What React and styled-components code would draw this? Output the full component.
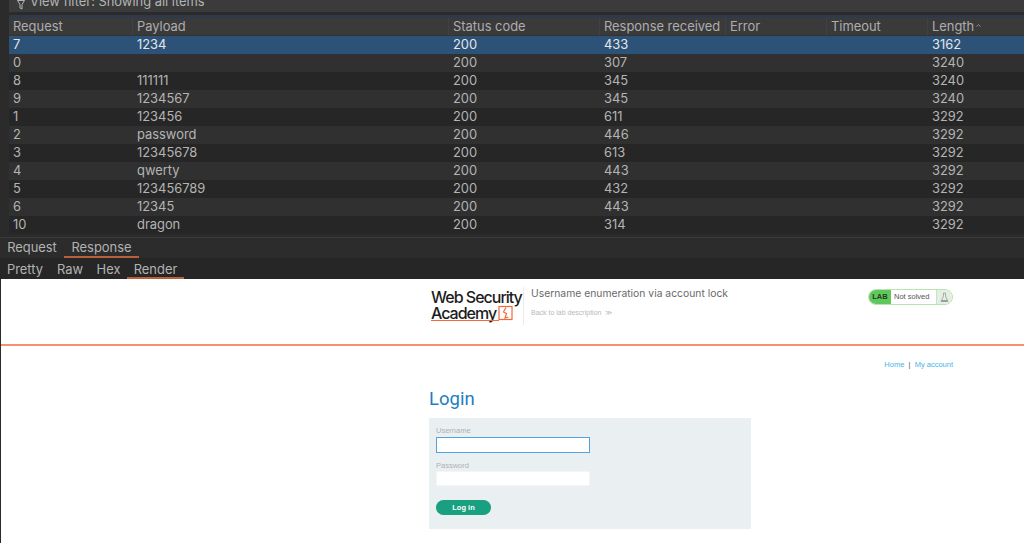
import React from "react";
import styled, { createGlobalStyle } from "styled-components";

const Global = createGlobalStyle`
  html, body { margin: 0; padding: 0; background: #2b2b2b; overflow: hidden; }
  * { box-sizing: border-box; }
`;

const Page = styled.div`
  width: 1024px;
  height: 543px;
  display: flex;
  flex-direction: column;
  overflow: hidden;
  background: #2b2b2b;
  font-family: Inter, "Liberation Sans", sans-serif;
  color: #bdbdbd;
`;

const FilterBar = styled.div`
  height: 12px;
  margin-left: 9px;
  background: #3b3b3c;
  display: flex;
  align-items: flex-end;
  gap: 5px;
  padding-left: 8px;
  font-size: 12.9px;
  line-height: 16px;
  color: #b4b4b4;
`;

const FilterLabel = styled.span`
  display: block;
  margin-bottom: 2px;
  white-space: nowrap;
`;

const Table = styled.div`
  margin: 3px 0 0 9px;
  border-top: 3px solid #30394a;
  background: #2e2e2e;
`;

const Row = styled.div`
  height: 18px;
  display: grid;
  grid-template-columns: 124px 316px 151px 126px 101px 101px 1fr;
  font-size: 12.9px;
  line-height: 17px;
  background: ${(p) => (p.$selected ? "#2d5277" : p.$alt ? "#262626" : "#303030")};
  color: ${(p) => (p.$selected ? "#e2e6ea" : "#b4b4b4")};
`;

const HeaderRow = styled(Row)`
  background: #3a3a3b;
  color: #adadad;
  border-bottom: 1px solid #333;
`;

const Cell = styled.div`
  padding-left: 4px;
  white-space: nowrap;
  overflow: hidden;
`;

const HeadCell = styled(Cell)`
  border-right: 1px solid #414142;
`;

const SortMark = styled.svg`
  width: 5px;
  height: 3px;
  margin: 0 0 4px 2px;
`;

const TabBar = styled.div`
  height: 21px;
  margin-top: 3px;
  display: flex;
  background: #2c2c2c;
  font-size: 12.9px;
  line-height: 20px;
  border-top: 1px solid #3a3a3a;
`;

const SubTabBar = styled(TabBar)`
  margin-top: 0;
  border-top: 0;
  height: 21px;
  line-height: 24px;
  background: #262626;
`;

const Tab = styled.div`
  width: ${(p) => p.$w}px;
  text-align: center;
  height: 100%;
  color: #b2b2b2;
  border-bottom: 2px solid ${(p) => (p.$active ? "#b9603a" : "transparent")};
`;

const Render = styled.div`
  flex: 1;
  margin-left: 1px;
  background: #fff;
  font-family: Roboto, "Liberation Sans", sans-serif;
  display: flex;
  flex-direction: column;
`;

const LabHeader = styled.div`
  height: 67px;
  border-bottom: 2px solid #f8906c;
  display: flex;
  padding-left: 430px;
  flex-shrink: 0;
`;

const Logo = styled.div`
  width: 92px;
  padding-top: 10px;
  position: relative;
  color: #1c1c1c;
  font-family: Inter, "Liberation Sans", sans-serif;
  font-size: 16px;
  line-height: 16px;
  letter-spacing: -1px;
  font-weight: 500;
`;

const LogoLine = styled.div`
  white-space: nowrap;
`;

const LogoMark = styled.svg`
  width: 16px;
  height: 16px;
  position: absolute;
  left: 67px;
  top: 26px;
`;

const LogoUnder = styled.div`
  position: absolute;
  left: 0;
  top: 41px;
  width: 68px;
  height: 1px;
  background: #f26a3a;
`;

const TitleBox = styled.div`
  border-left: 1px solid #ececec;
  height: 38px;
  margin-top: 8px;
  position: relative;
  width: 345px;
  flex-shrink: 0;
`;

const LabTitle = styled.div`
  position: absolute;
  top: -1px;
  left: 7px;
  font-size: 10.35px;
  line-height: 14px;
  color: #6a6a6a;
  white-space: nowrap;
  font-family: Inter, "Liberation Sans", sans-serif;
`;

const BackLink = styled.div`
  position: absolute;
  top: 21px;
  left: 7px;
  font-size: 7px;
  line-height: 10px;
  color: #b9b9b9;
  white-space: nowrap;
  font-family: "Liberation Sans", sans-serif;
`;

const Badge = styled.div`
  margin: 10px 0 0 0;
  width: 85px;
  height: 16px;
  border: 1px solid #b8e4b0;
  border-radius: 8px;
  display: flex;
  overflow: hidden;
  flex-shrink: 0;
  font-family: "Liberation Sans", sans-serif;
`;

const BadgeLab = styled.div`
  width: 22px;
  background: #5fc75c;
  color: #23401f;
  font-size: 7.5px;
  font-weight: 700;
  line-height: 14px;
  text-align: center;
`;

const BadgeText = styled.div`
  width: 45px;
  font-size: 7.5px;
  line-height: 14px;
  color: #555;
  padding-left: 3px;
  white-space: nowrap;
`;

const BadgeIcon = styled.div`
  flex: 1;
  background: #e2efe2;
  border-left: 1px solid #c4e6bf;
  display: flex;
  align-items: center;
  justify-content: center;
`;

const Nav = styled.div`
  margin-top: 14px;
  padding-right: 71px;
  text-align: right;
  font-size: 7.5px;
  line-height: 10px;
  color: #555;
  font-family: "Liberation Sans", sans-serif;
`;

const NavLink = styled.span`
  color: #46b4e6;
`;

const Content = styled.div`
  padding-left: 428px;
`;

const Heading = styled.h1`
  margin: 18px 0 0;
  font-size: 18.5px;
  line-height: 22px;
  font-weight: 400;
  color: #1c7fc0;
`;

const Form = styled.div`
  margin-top: 8px;
  width: 322px;
  height: 111px;
  background: #eaeff2;
  padding: 8px 7px 0;
`;

const Label = styled.div`
  font-size: 7.5px;
  line-height: 10px;
  color: #aeb2b5;
  font-family: "Liberation Sans", sans-serif;
`;

const Field = styled.div`
  width: 154px;
  height: ${(p) => (p.$focus ? 16 : 15)}px;
  margin: ${(p) => (p.$focus ? 1 : 0)}px 0 ${(p) => (p.$focus ? 8 : 14)}px;
  background: #fff;
  border: ${(p) => (p.$focus ? "1px solid #4fa3e0" : "1px solid #f3f5f6")};
`;

const Button = styled.div`
  width: 55px;
  height: 15px;
  border-radius: 8px;
  background: #18a080;
  color: #fff;
  font-size: 7.5px;
  font-weight: 700;
  line-height: 15px;
  text-align: center;
  font-family: "Liberation Sans", sans-serif;
`;

const rows = [
  ["7", "1234", "433", "3162"],
  ["0", "", "307", "3240"],
  ["8", "111111", "345", "3240"],
  ["9", "1234567", "345", "3240"],
  ["1", "123456", "611", "3292"],
  ["2", "password", "446", "3292"],
  ["3", "12345678", "613", "3292"],
  ["4", "qwerty", "443", "3292"],
  ["5", "123456789", "432", "3292"],
  ["6", "12345", "443", "3292"],
  ["10", "dragon", "314", "3292"],
];

export default function App() {
  return (
    <Page>
      <Global />
      <FilterBar>
        <svg width="8" height="10" viewBox="0 0 8 10" style={{ marginBottom: 2 }}>
          <path d="M0.5 0.5h7L5 4.5V9L3 8V4.5z" fill="none" stroke="#b4b4b4" />
        </svg>
        <FilterLabel>View filter: Showing all items</FilterLabel>
      </FilterBar>
      <Table>
        <HeaderRow>
          <HeadCell>Request</HeadCell>
          <HeadCell>Payload</HeadCell>
          <HeadCell>Status code</HeadCell>
          <HeadCell>Response received</HeadCell>
          <HeadCell>Error</HeadCell>
          <HeadCell>Timeout</HeadCell>
          <Cell>
            Length
            <SortMark viewBox="0 0 5 3">
              <path d="M0.5 2.5L2.5 0.7l2 1.8" fill="none" stroke="#8f8f8f" />
            </SortMark>
          </Cell>
        </HeaderRow>
        {rows.map((r, i) => (
          <Row key={r[0]} $selected={i === 0} $alt={i % 2 === 0}>
            <Cell>{r[0]}</Cell>
            <Cell>{r[1]}</Cell>
            <Cell>200</Cell>
            <Cell>{r[2]}</Cell>
            <Cell />
            <Cell />
            <Cell>{r[3]}</Cell>
          </Row>
        ))}
      </Table>
      <TabBar>
        <Tab $w={64}>Request</Tab>
        <Tab $w={75} $active>Response</Tab>
      </TabBar>
      <SubTabBar>
        <Tab $w={50}>Pretty</Tab>
        <Tab $w={40}>Raw</Tab>
        <Tab $w={37}>Hex</Tab>
        <Tab $w={57} $active>Render</Tab>
      </SubTabBar>
      <Render>
        <LabHeader>
          <Logo>
            <LogoLine>Web Security</LogoLine>
            <LogoLine>Academy</LogoLine>
            <LogoUnder />
            <LogoMark viewBox="0 0 16 16">
              <rect x="1" y="1.5" width="13" height="13" fill="#fff" stroke="#f26a3a" strokeWidth="1.2" />
              <path d="M8 2.5L5.5 7l3 1.5L7 13l3.5-1" fill="none" stroke="#f26a3a" strokeWidth="1.2" />
            </LogoMark>
          </Logo>
          <TitleBox>
            <LabTitle>Username enumeration via account lock</LabTitle>
            <BackLink>Back to lab description &nbsp;≫</BackLink>
          </TitleBox>
          <Badge>
            <BadgeLab>LAB</BadgeLab>
            <BadgeText>Not solved</BadgeText>
            <BadgeIcon>
              <svg width="9" height="11" viewBox="0 0 9 11">
                <path d="M3.5 1h2v3l2.5 5.5H1L3.5 4z" fill="none" stroke="#9a9a9a" strokeWidth="0.8" />
                <path d="M2 8h5l.8 1.7H1.2z" fill="#9a9a9a" />
              </svg>
            </BadgeIcon>
          </Badge>
        </LabHeader>
        <Nav>
          <NavLink>Home</NavLink> &nbsp;|&nbsp; <NavLink>My account</NavLink>
        </Nav>
        <Content>
          <Heading>Login</Heading>
          <Form>
            <Label>Username</Label>
            <Field $focus />
            <Label>Password</Label>
            <Field />
            <Button>Log in</Button>
          </Form>
        </Content>
      </Render>
    </Page>
  );
}
